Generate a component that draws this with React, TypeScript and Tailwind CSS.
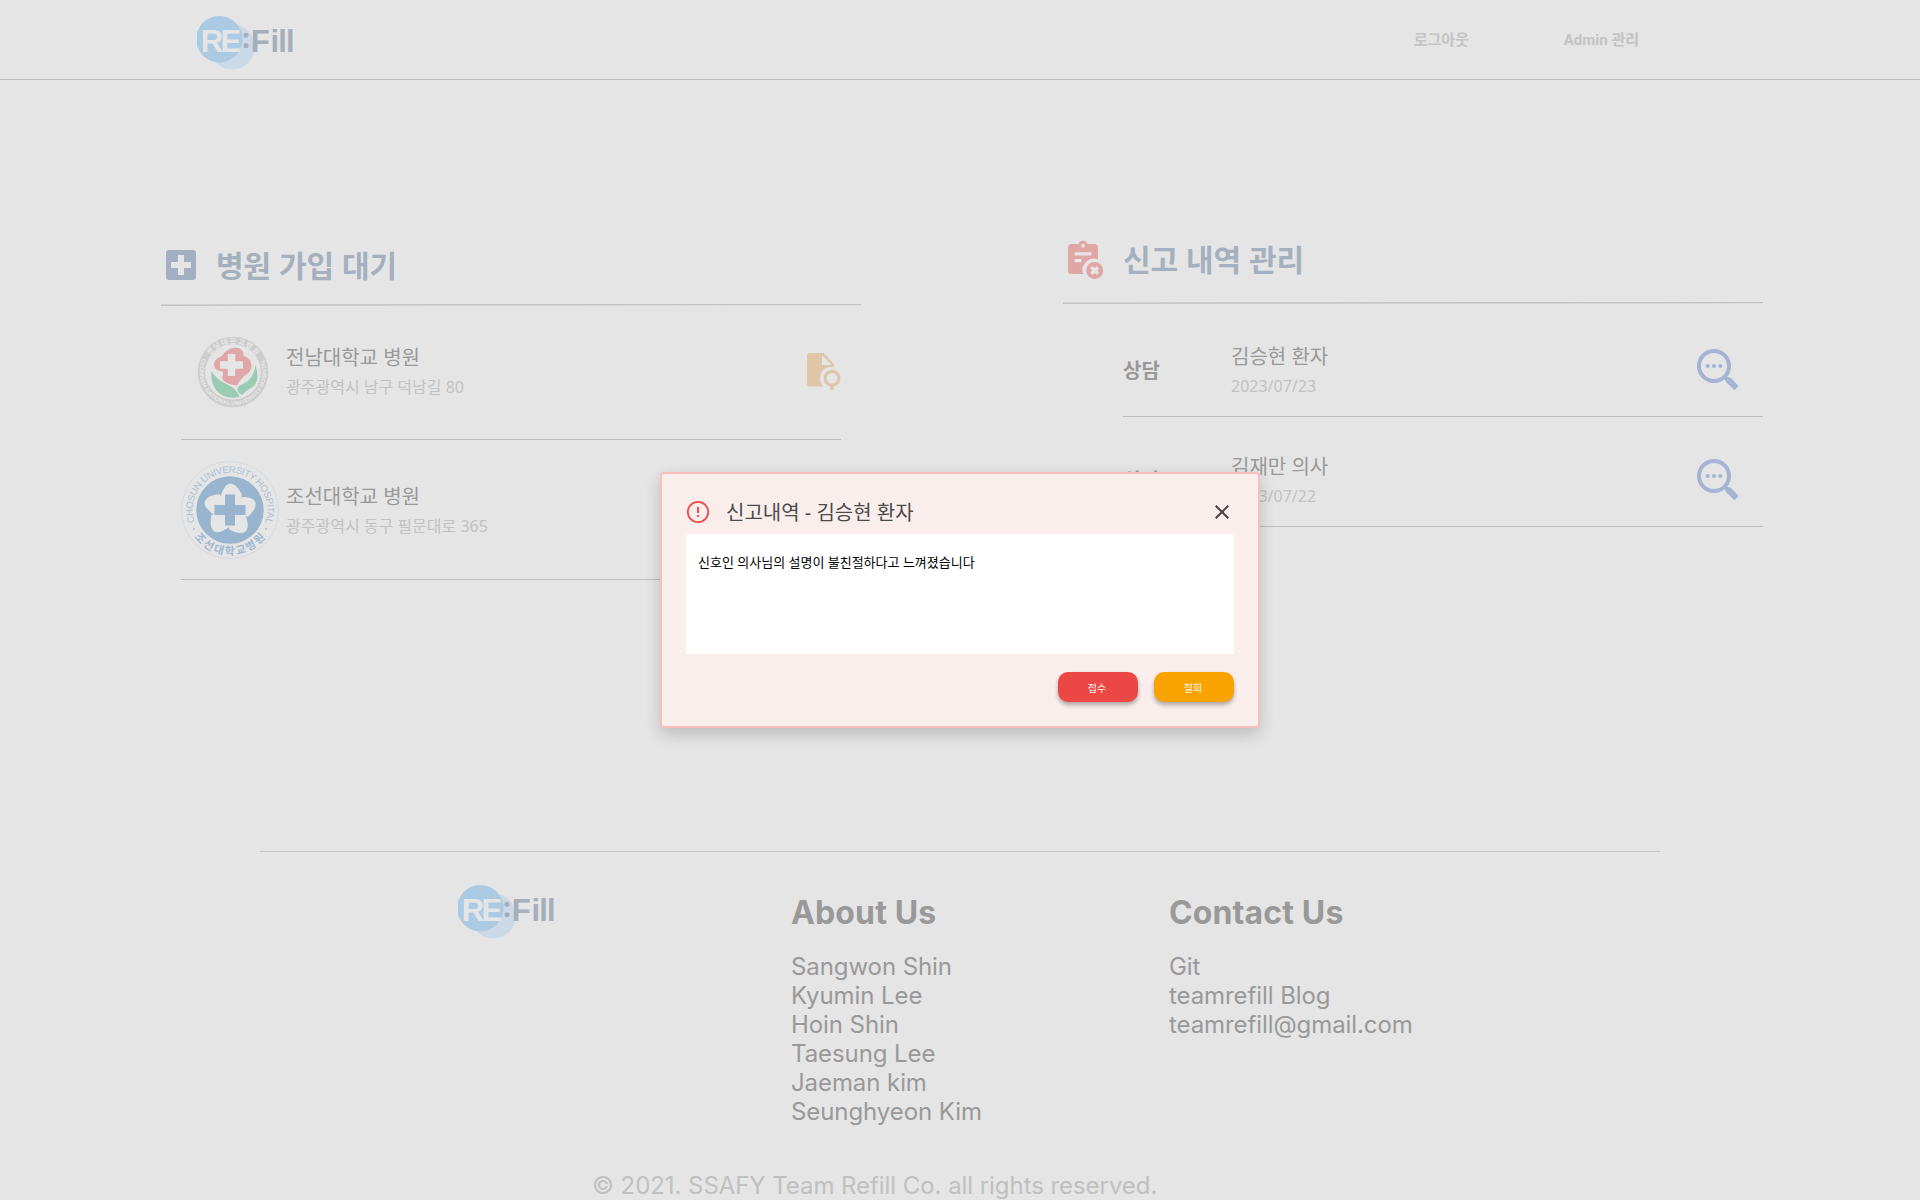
import React from "react";

const Logo = () => (
  <svg width="100" height="56" viewBox="0 0 100 56" className="block shrink-0">
    <circle cx="35.200" cy="31.800" r="22.600" fill="#cbd9e6" />
    <circle cx="22.300" cy="24.200" r="23.200" fill="#abcae3" />
    <g fontFamily="'Liberation Sans',sans-serif" fontWeight="700" fontSize="31">
      <text x="3.700 23.500" y="37.200" fill="#e5e5e5">RE</text>
      <text x="53.700 73.500 81.200 88.900" y="37.200" fill="#a6aebc">Fill</text>
    </g>
    <circle cx="49" cy="20.200" r="2.500" fill="#a3adbd" />
    <circle cx="49" cy="30.700" r="2.500" fill="#a3adbd" />
  </svg>
);

const HospitalIcon = () => (
  <svg width="30" height="30" viewBox="0 0 30 30" className="block">
    <rect width="30" height="30" rx="3" fill="#a3b0c3" />
    <path d="M12 5h6v7h7v6h-7v7h-6v-7H5v-6h7z" fill="#e5e5e5" />
  </svg>
);

const ReportIcon = () => (
  <svg width="36" height="40" viewBox="0 0 36 40" className="block">
    <path d="M3.500 4H10.500a4.800 4.800 0 0 1 9 0h7a3.500 3.500 0 0 1 3.500 3.500V19.500a11.300 11.300 0 0 0-14.700 14.500H3.500A3.500 3.500 0 0 1 0 30.500V7.500A3.500 3.500 0 0 1 3.500 4z" fill="#dfa6a4" />
    <circle cx="15" cy="5.700" r="1.900" fill="#e5e5e5" />
    <path d="M6.500 12.300h17v3.200h-17zM6.500 19h7v3.200h-7z" fill="#e5e5e5" />
    <circle cx="26.700" cy="30.500" r="8.500" fill="#dfa6a4" />
    <path d="M23.400 27.200l6.600 6.600M30 27.200l-6.600 6.600" stroke="#e5e5e5" strokeWidth="3.400" />
  </svg>
);

const FileIcon = () => (
  <svg width="34" height="37" viewBox="0 0 34 37" className="block">
    <path d="M3 0h13.500L27 11v3.200a11.300 11.300 0 0 0-10.500 19.300H3a3 3 0 0 1-3-3V3a3 3 0 0 1 3-3z" fill="#dfc6a9" />
    <path d="M15 2.500V12h10z" fill="#e5e5e5" />
    <circle cx="25" cy="25.200" r="6.900" fill="none" stroke="#dfc6a9" strokeWidth="3.200" />
    <path d="M25 32v5" stroke="#dfc6a9" strokeWidth="3.600" />
  </svg>
);

const SearchIcon = () => (
  <svg width="42" height="42" viewBox="0 0 42 42" className="block">
    <circle cx="17" cy="17" r="15" fill="none" stroke="#a5b3d5" strokeWidth="4" />
    <path d="M27 29l2.500-1.500L34 29l7.500 8-4 4.300L29.500 33.500z" fill="#a5b3d5" />
    <g fill="#a5b3d5">
      <circle cx="10.700" cy="17" r="2.100" />
      <circle cx="17" cy="17" r="2.100" />
      <circle cx="23.300" cy="17" r="2.100" />
    </g>
  </svg>
);

const ChonnamEmblem = () => (
  <svg width="72" height="72" viewBox="-36 -36 72 72" className="block">
    <defs>
      <path id="cn-top" d="M-28.500 0A28.500 28.500 0 0 1 28.500 0" />
      <path id="cn-bot" d="M-29.500-15.500A33.300 33.300 0 1 0 29.500-15.500" />
    </defs>
    <circle r="31.500" fill="none" stroke="#cdcdcd" strokeWidth="7.500" />
    <g fontFamily="'Liberation Sans','Noto Sans CJK KR',sans-serif" fontWeight="700" fill="#e9e9e9">
      <text fontSize="7" textAnchor="middle" textLength="54"><textPath href="#cn-top" startOffset="50%">전남대학교병원</textPath></text>
      <text fontSize="5.600" textLength="132"><textPath href="#cn-bot" startOffset="2">CHONNAM NATIONAL UNIVERSITY HOSPITAL</textPath></text>
    </g>
    <path d="M-11-16Q-7-23 2-24.500Q11-24 11-16Q18-14 18.500-6Q18 1 11 4Q6 9 4 13.500Q-10 12-11 5Q-8 0-12-1Q-19-1-19-8Q-18-14-11-16z" fill="#e0a7a8" />
    <path d="M-5.200-18h7.400v7.300h7.800v7.400h-7.800v7.300h-7.400v-7.300h-7.800v-7.400h7.800z" fill="#e5e5e5" />
    <path d="M-21.500-1Q-17 7-7 12Q4 16 6.500 25Q-9 28-17 18Q-23 9-21.500-1zM22.500-7Q28 10 18 16Q12 19 9 23L5 20Q3 14 10 12Q21 7 22.500-7z" fill="#9acbb3" />
  </svg>
);

const ChosunEmblem = () => (
  <svg width="98" height="98" viewBox="-49 -49 98 98" className="block">
    <defs>
      <path id="cs-top" d="M-35 13A37.300 37.300 0 1 1 35 13" />
      <path id="cs-bot" d="M-37 25.600A45 45 0 0 0 37 25.600" />
    </defs>
    <circle r="48.500" fill="none" stroke="#cdd5dd" strokeWidth="0.800" />
    <circle r="33.700" fill="#98b4ce" />
    <g fill="#e5e5e5">
      {[0, 72, 144, 216, 288].map((a) => (
        <path key={a} transform={`rotate(${a})`} d="M-8-9.500L-9-15Q-5-26.500 0-26.500Q7-26.500 12-15L7-8L0 4z" />
      ))}
      <circle r="11" />
    </g>
    <path d="M-5-15.500H5V-5H15.500V5H5V15.500H-5V5H-15.500V-5H-5z" fill="#98b4ce" />
    <text fontFamily="'Liberation Sans',sans-serif" fontSize="9.600" fill="#acc0d3" textLength="142"><textPath href="#cs-top" startOffset="1">CHOSUN UNIVERSITY HOSPITAL</textPath></text>
    <text fontFamily="'Noto Sans CJK KR',sans-serif" fontWeight="700" fontSize="11" fill="#9fb8d0" textLength="82"><textPath href="#cs-bot" startOffset="2">조선대학교병원</textPath></text>
    <circle cx="-36" cy="19" r="1" fill="#a9bed2" />
    <circle cx="36" cy="19" r="1" fill="#a9bed2" />
  </svg>
);

const SectionRule = () => (
  <svg width="700" height="2" viewBox="0 0 700 2" className="block">
    <path d="M0 1.200L700 0.500" stroke="#c3c3c3" strokeWidth="1.500" />
  </svg>
);

const NameBlock = ({ name, detail }: { name: string; detail: string }) => (
  <div className="flex flex-col">
    <span className="text-[20px] leading-[30px] text-[#999999]">{name}</span>
    <span className="text-[16px] leading-[28px] text-[#c2c2c2]">{detail}</span>
  </div>
);

const ReportRow = ({ name, date }: { name: string; date: string }) => (
  <li className="ml-[60px] flex h-[110px] items-center border-b border-[#bebebe] pt-[17px]">
    <span className="w-[108px] pt-[2px] text-[20px] font-bold text-[#999999]">상담</span>
    <div className="pt-[2px]"><NameBlock name={name} detail={date} /></div>
    <span className="mr-6 ml-auto"><SearchIcon /></span>
  </li>
);

const members = ["Sangwon Shin", "Kyumin Lee", "Hoin Shin", "Taesung Lee", "Jaeman kim", "Seunghyeon Kim"];
const contacts = ["Git", "teamrefill Blog", "teamrefill@gmail.com"];

const FooterColumn = ({ title, items }: { title: string; items: string[] }) => (
  <div>
    <h3 className="text-[32px] leading-[40px] font-bold tracking-[0.13px]">{title}</h3>
    <ul className="mt-[19px] text-[24px] leading-[29px] tracking-[-0.08px]">
      {items.map((item) => <li key={item}>{item}</li>)}
    </ul>
  </div>
);

export default function App() {
  return (
    <div className="relative flex h-[1200px] w-[1920px] flex-col overflow-hidden bg-[#e5e5e5] font-['Noto_Sans','Noto_Sans_CJK_KR',sans-serif]">
      <header className="flex h-[80px] shrink-0 items-start border-b border-[#bebebe] pl-[197px]">
        <div className="pt-[15px]"><Logo /></div>
        <nav className="ml-auto flex pt-[29px] pr-[281px] font-[Roboto,'Noto_Sans_CJK_KR',sans-serif] text-[15px] leading-[22px] font-bold text-[#c3c3c3]">
          <a className="w-[150px]">로그아웃</a>
          <a>Admin 관리</a>
        </nav>
      </header>

      <main className="flex h-[771px] shrink-0 justify-between pr-[157px] pl-[161px]">
        <section className="w-[700px]">
          <div className="flex h-[224px] items-end pb-[16px] pl-[5px]">
            <span className="mb-[8px]"><HospitalIcon /></span>
            <h2 className="ml-[20px] text-[30px] leading-[44px] font-bold text-[#a5b0bf]">병원 가입 대기</h2>
          </div>
          <SectionRule />
          <ul className="mx-[20px]">
            <li className="flex h-[134px] items-center border-b border-[#bebebe] pb-[2px] pl-[16px]">
              <ChonnamEmblem />
              <div className="ml-[17px]"><NameBlock name="전남대학교 병원" detail="광주광역시 남구 덕남길 80" /></div>
              <span className="ml-auto"><FileIcon /></span>
            </li>
            <li className="flex h-[140px] items-center border-b border-[#bebebe]">
              <ChosunEmblem />
              <div className="ml-[7px] pt-[2px]"><NameBlock name="조선대학교 병원" detail="광주광역시 동구 필문대로 365" /></div>
            </li>
          </ul>
        </section>

        <section className="w-[700px]">
          <div className="flex h-[222px] items-end pb-[20px] pl-[5px]">
            <span className="mb-[2px]"><ReportIcon /></span>
            <h2 className="ml-[19px] text-[30px] leading-[44px] font-bold text-[#a5b0bf]">신고 내역 관리</h2>
          </div>
          <SectionRule />
          <ul className="pt-[3px]">
            <ReportRow name="김승현 환자" date="2023/07/23" />
            <ReportRow name="김재만 의사" date="2023/07/22" />
          </ul>
        </section>
      </main>

      <footer className="mx-[260px] shrink-0 border-t border-[#c4c4c4] font-[Inter,sans-serif] text-[#999999]">
        <div className="grid h-[311px] grid-cols-[333px_378px_auto] pt-[41px] pl-[198px]">
          <div className="-mt-[9px]"><Logo /></div>
          <FooterColumn title="About Us" items={members} />
          <FooterColumn title="Contact Us" items={contacts} />
        </div>
        <p className="pt-[8px] pl-[332px] text-[24px] leading-[29px] tracking-[-0.06px] text-[#c0c0c0]">© 2021. SSAFY Team Refill Co. all rights reserved.</p>
      </footer>

      <div role="dialog" className="absolute top-[472px] left-[660px] flex h-[256px] w-[600px] flex-col rounded-[4px] border-2 border-[#f9bfbe] bg-[#faeeec] px-6 shadow-[0_6px_16px_rgba(0,0,0,0.18)]">
        <div className="flex h-[60px] items-end pb-[6px]">
          <svg width="24" height="24" viewBox="0 0 24 24" className="mb-[4px] block">
            <circle cx="12" cy="12" r="10.200" fill="none" stroke="#ee4946" strokeWidth="1.800" />
            <path d="M12 7v6M12 15v2" stroke="#ee4946" strokeWidth="2" />
          </svg>
          <h1 className="ml-[16px] text-[20px] leading-[30px] text-[#4a4a4a]">신고내역 - 김승현 환자</h1>
          <svg width="14" height="14" viewBox="0 0 14 14" className="mr-[5px] mb-[9px] ml-auto block">
            <path d="M0.700 0.700L13.300 13.300M13.300 0.700L0.700 13.300" stroke="#444444" strokeWidth="2" />
          </svg>
        </div>
        <div className="h-[120px] bg-white px-3 pt-[18px] text-[13px] leading-[20px] text-black">신호인 의사님의 설명이 불친절하다고 느껴졌습니다</div>
        <div className="mt-[18px] flex justify-end gap-4 text-[10px] text-white/90">
          <button className="h-[30px] w-20 rounded-[10px] bg-[#eb4744] pt-[2px] pr-[2px] shadow-[0_3px_4px_rgba(0,0,0,0.3)]">접수</button>
          <button className="h-[30px] w-20 rounded-[10px] bg-[#f9a303] pt-[2px] pr-[2px] shadow-[0_3px_4px_rgba(0,0,0,0.3)]">철회</button>
        </div>
      </div>
    </div>
  );
}
